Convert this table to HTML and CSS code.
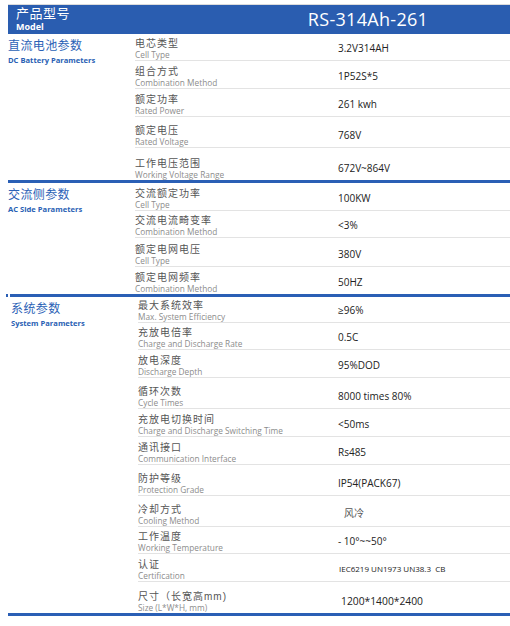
FILE: index.html
```html
<!DOCTYPE html>
<html lang="zh">
<head>
<meta charset="utf-8">
<title>RS-314Ah-261</title>
<link rel="stylesheet" href="styles.css">
</head>
<body>
<div class="sheet">
  <div class="topline"></div>
  <header class="head">
    <div class="head-l">
      <div class="head-cn">产品型号</div>
      <div class="head-en">Model</div>
    </div>
    <div class="head-r">RS-314Ah-261</div>
  </header>

  <section class="sec">
    <div class="title">
      <div class="tcn">直流电池参数</div>
      <div class="ten">DC Battery Parameters</div>
    </div>
    <div class="rows">
      <div class="row h27"><div class="lab"><span class="lcn">电芯类型</span><span class="len">Cell Type</span></div><div class="val">3.2V314AH</div></div>
      <div class="row h28"><div class="lab"><span class="lcn">组合方式</span><span class="len">Combination Method</span></div><div class="val">1P52S*5</div></div>
      <div class="row h28"><div class="lab"><span class="lcn">额定功率</span><span class="len">Rated Power</span></div><div class="val">261 kwh</div></div>
      <div class="row h31"><div class="lab"><span class="lcn">额定电压</span><span class="len">Rated Voltage</span></div><div class="val">768V</div></div>
      <div class="row h32 last"><div class="lab"><span class="lcn">工作电压范围</span><span class="len">Working Voltage Range</span></div><div class="val">672V~864V</div></div>
    </div>
  </section>
  <div class="bar"></div>

  <section class="sec">
    <div class="title">
      <div class="tcn">交流侧参数</div>
      <div class="ten">AC Side Parameters</div>
    </div>
    <div class="rows">
      <div class="row h28"><div class="lab"><span class="lcn">交流额定功率</span><span class="len">Cell Type</span></div><div class="val">100KW</div></div>
      <div class="row h27"><div class="lab"><span class="lcn">交流电流畸变率</span><span class="len">Combination Method</span></div><div class="val">&lt;3%</div></div>
      <div class="row h29"><div class="lab"><span class="lcn">额定电网电压</span><span class="len">Cell Type</span></div><div class="val">380V</div></div>
      <div class="row h27 last"><div class="lab"><span class="lcn">额定电网频率</span><span class="len">Combination Method</span></div><div class="val">50HZ</div></div>
    </div>
  </section>
  <div class="bar bar-gap"></div>

  <section class="sec sys">
    <div class="title">
      <div class="tcn">系统参数</div>
      <div class="ten">System Parameters</div>
    </div>
    <div class="rows">
      <div class="row h26"><div class="lab"><span class="lcn">最大系统效率</span><span class="len">Max. System Efficiency</span></div><div class="val">≥96%</div></div>
      <div class="row h27"><div class="lab"><span class="lcn">充放电倍率</span><span class="len">Charge and Discharge Rate</span></div><div class="val">0.5C</div></div>
      <div class="row h28"><div class="lab"><span class="lcn">放电深度</span><span class="len">Discharge Depth</span></div><div class="val">95%DOD</div></div>
      <div class="row h31"><div class="lab"><span class="lcn">循环次数</span><span class="len">Cycle Times</span></div><div class="val">8000 times 80%</div></div>
      <div class="row h28"><div class="lab"><span class="lcn">充放电切换时间</span><span class="len">Charge and Discharge Switching Time</span></div><div class="val">&lt;50ms</div></div>
      <div class="row h28"><div class="lab"><span class="lcn">通讯接口</span><span class="len">Communication Interface</span></div><div class="val">Rs485</div></div>
      <div class="row h31"><div class="lab"><span class="lcn">防护等级</span><span class="len">Protection Grade</span></div><div class="val">IP54(PACK67)</div></div>
      <div class="row h31"><div class="lab"><span class="lcn">冷却方式</span><span class="len">Cooling Method</span></div><div class="val val-cn">风冷</div></div>
      <div class="row h27"><div class="lab"><span class="lcn">工作温度</span><span class="len">Working Temperature</span></div><div class="val">- 10°~~50°</div></div>
      <div class="row h28"><div class="lab"><span class="lcn">认证</span><span class="len">Certification</span></div><div class="val val-sm">IEC6219 UN1973 UN38.3&nbsp; CB</div></div>
      <div class="row h31 last"><div class="lab"><span class="lcn">尺寸（长宽高mm)</span><span class="len">Size (L*W*H, mm)</span></div><div class="val val-lg">1200*1400*2400</div></div>
    </div>
  </section>
  <div class="bar"></div>
</div>
</body>
</html>
```

FILE: styles.css
```css
* { box-sizing: border-box; }

html, body {
  margin: 0;
  padding: 0;
  background: #ffffff;
}

body {
  font-family: "Open Sans", "Noto Sans CJK SC", sans-serif;
  color: #222;
}

.sheet {
  padding: 4px 0 0 8px;
}

.topline {
  height: 1px;
  background: #dcdcdc;
}

.head {
  display: flex;
  height: 29px;
  background: #2a5db0;
  color: #fff;
}

.head-l {
  width: 218px;
  padding-left: 8px;
}

.head-cn {
  font-family: "Liberation Sans", "Noto Sans CJK SC", sans-serif;
  font-size: 13px;
  line-height: 15px;
  padding-top: 1px;
  letter-spacing: 0.5px;
}

.head-en {
  font-family: "Open Sans", sans-serif;
  font-weight: 700;
  font-size: 9px;
  line-height: 12px;
}

.head-r {
  flex: 1;
  text-align: center;
  font-family: "Open Sans", sans-serif;
  font-size: 18px;
  line-height: 29px;
  letter-spacing: 0.3px;
}

.sec {
  display: flex;
}

.title {
  width: 127px;
  color: #2b62b6;
}

.tcn {
  font-family: "Liberation Sans", "Noto Sans CJK SC", sans-serif;
  font-size: 12px;
  line-height: 14px;
  padding-top: 5px;
  letter-spacing: 0.4px;
}

.ten {
  font-family: "Open Sans", sans-serif;
  font-weight: 700;
  font-size: 7.6px;
  line-height: 10px;
  margin-top: 2px;
  color: #2a5fb4;
  white-space: nowrap;
}

.rows {
  flex: 1;
}

.row {
  display: flex;
  border-bottom: 1px solid #e3e3e3;
}

.row.last {
  border-bottom: 0;
}

.h26 { height: 26px; }
.h27 { height: 27px; }
.h28 { height: 28px; }
.h29 { height: 29px; }
.h31 { height: 31px; }
.h32 { height: 32px; }

.lab {
  width: 203px;
  display: flex;
  flex-direction: column;
  justify-content: flex-end;
}

.lcn {
  font-family: "Liberation Sans", "Noto Sans CJK SC", sans-serif;
  font-size: 10px;
  line-height: 13px;
  letter-spacing: 1px;
  color: #555;
  white-space: nowrap;
}

.len {
  font-family: "Open Sans", sans-serif;
  font-size: 8.3px;
  line-height: 10.5px;
  color: #8c8c8c;
  white-space: nowrap;
}

.val {
  align-self: flex-end;
  font-size: 10px;
  line-height: 12px;
  padding-bottom: 6px;
  color: #222;
  white-space: nowrap;
}

.val-cn {
  font-family: "Liberation Sans", "Noto Sans CJK SC", sans-serif;
  color: #555;
  padding-left: 6px;
}

.val-sm {
  font-size: 8px;
  padding-left: 1px;
}

.val-lg {
  font-size: 10.3px;
  padding-left: 3px;
}

.sys .title {
  padding-left: 3px;
}

.sys .rows {
  padding-left: 3px;
}

.sys .lab {
  width: 200px;
}

.bar {
  height: 3px;
  background: #2a5fb5;
}

.bar-gap {
  margin-left: -2px;
  background: linear-gradient(to right, #2a5fb5 0, #2a5fb5 2px, #fff 2px, #fff 4px, #2a5fb5 4px);
}
```
